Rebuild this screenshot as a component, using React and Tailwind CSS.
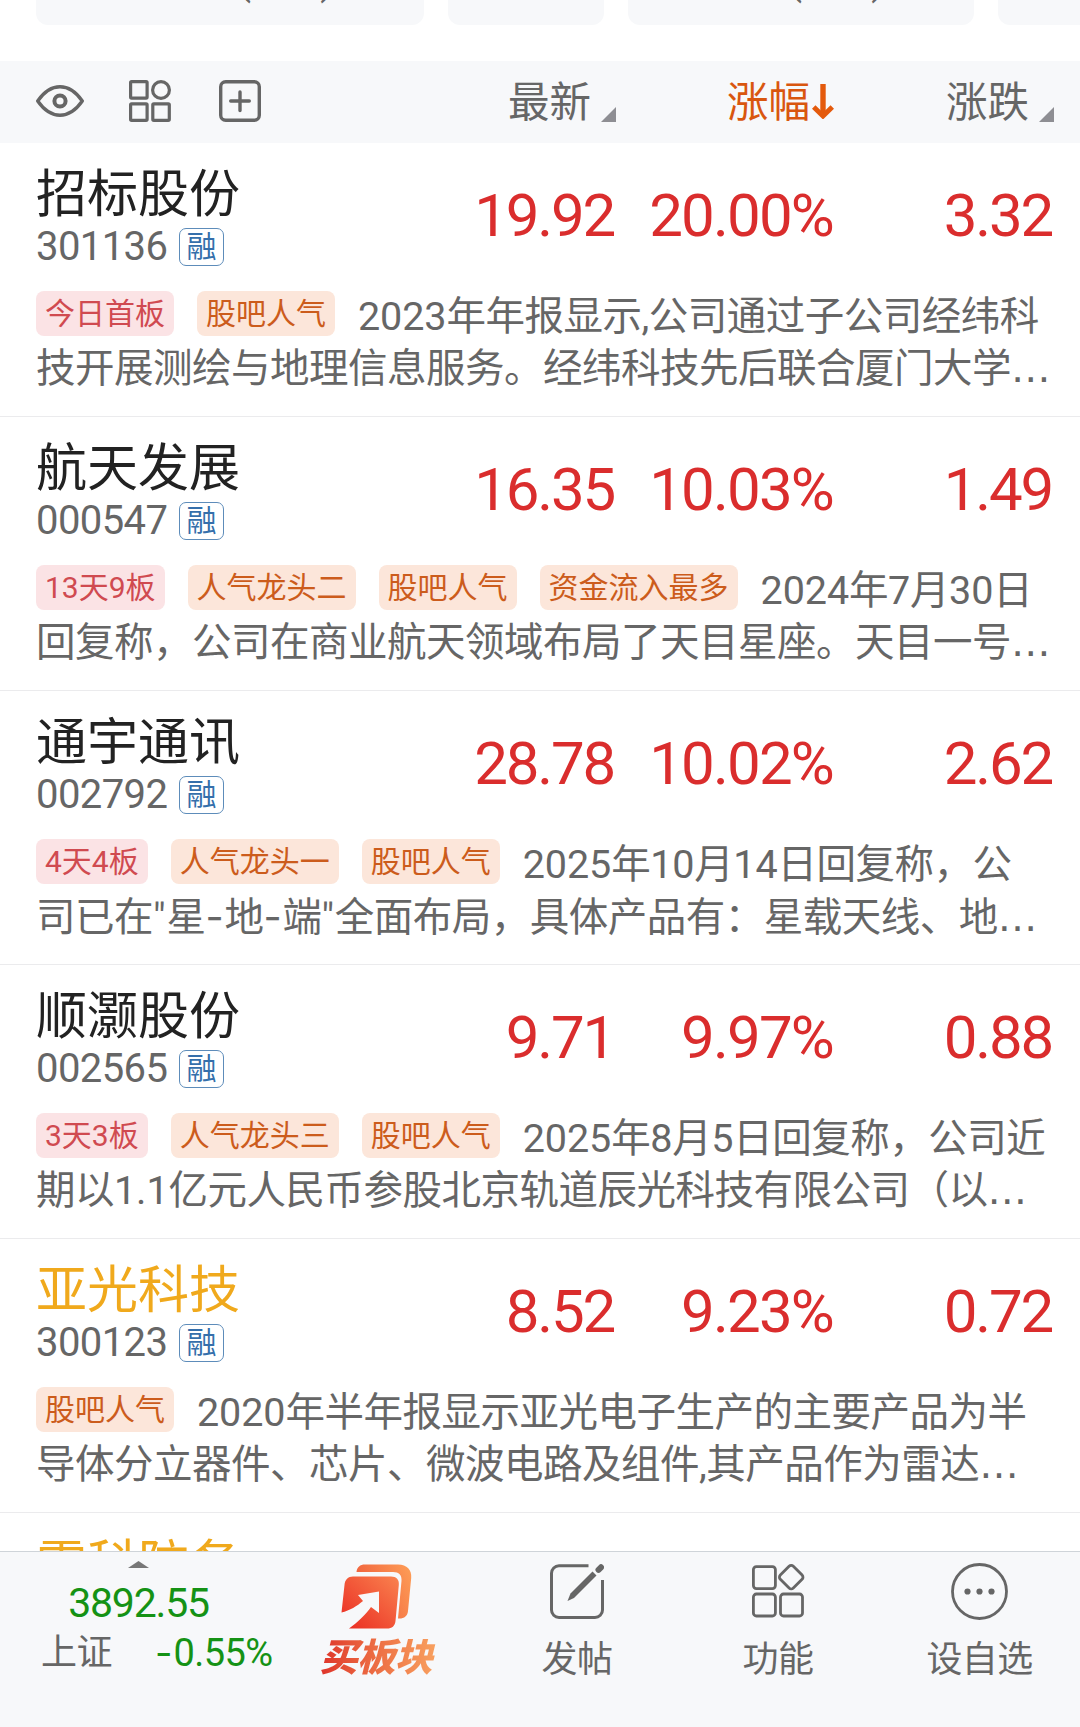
const stocks = [
  {
    name: '招标股份', code: '301136', price: '19.92', pct: '20.00%', change: '3.32',
    streak: '今日首板', tags: ['股吧人气'],
    lines: ['2023年年报显示,公司通过子公司经纬科', '技开展测绘与地理信息服务。经纬科技先后联合厦门大学…'],
  },
  {
    name: '航天发展', code: '000547', price: '16.35', pct: '10.03%', change: '1.49',
    streak: '13天9板', tags: ['人气龙头二', '股吧人气', '资金流入最多'],
    lines: ['2024年7月30日', '回复称，公司在商业航天领域布局了天目星座。天目一号…'],
  },
  {
    name: '通宇通讯', code: '002792', price: '28.78', pct: '10.02%', change: '2.62',
    streak: '4天4板', tags: ['人气龙头一', '股吧人气'],
    lines: ['2025年10月14日回复称，公', '司已在"星-地-端"全面布局，具体产品有：星载天线、地…'],
  },
  {
    name: '顺灏股份', code: '002565', price: '9.71', pct: '9.97%', change: '0.88',
    streak: '3天3板', tags: ['人气龙头三', '股吧人气'],
    lines: ['2025年8月5日回复称，公司近', '期以1.1亿元人民币参股北京轨道辰光科技有限公司（以…'],
  },
  {
    name: '亚光科技', code: '300123', price: '8.52', pct: '9.23%', change: '0.72', held: true,
    tags: ['股吧人气'],
    lines: ['2020年半年报显示亚光电子生产的主要产品为半', '导体分立器件、芯片、微波电路及组件,其产品作为雷达…'],
  },
];

// latin runs are tracked looser than the CJK text around them,
// hyphen and ellipsis come from fonts with wider glyphs
function Mixed({ text }) {
  return text.split(/(-|…|"|[\d.]+)/).filter(Boolean).map((part, i) => {
    if (part === '-') return <span key={i} className="font-['Inter'] tracking-[0.8px]">-</span>;
    if (part === '…') return <span key={i} className="font-['DejaVu_Sans'] leading-none tracking-normal">…</span>;
    if (part === '"') return <span key={i} className="tracking-[0.8px]">"</span>;
    if (/^\d/.test(part)) return <span key={i} className="tracking-[-0.1px]">{part}</span>;
    return part;
  });
}

function Chip({ className, children }) {
  return (
    <div className={`-mt-[35px] h-[60px] shrink-0 rounded-[12px] bg-[#f7f8fa] pl-[37px] text-[41px] leading-[30px] text-[#666] ${className}`}>
      {children}
    </div>
  );
}

function Corner() {
  return (
    <svg className="ml-[9px] mt-[25px] h-[15px] w-[15px]" viewBox="0 0 15 15">
      <path d="M15 0V15H0Z" fill="#8e8e93" />
    </svg>
  );
}

function ListHeader() {
  return (
    <div className="flex h-[82px] shrink-0 items-center bg-[#f7f8fa] pl-9 text-[41.5px] leading-[60px] text-[#666]">
      <div className="mb-[2px] flex items-center">
        <svg className="h-8 w-12" viewBox="0 0 48 32" fill="none" stroke="#666" strokeWidth="3.4">
          <path d="M1.7 16C8 7 16 1.8 24 1.8S40 7 46.3 16C40 25 32 30.2 24 30.2S8 25 1.7 16Z" strokeLinejoin="round" />
          <circle cx="24" cy="16" r="5.6" strokeWidth="4" />
        </svg>
        <svg className="ml-[45px] h-[42px] w-[42px]" viewBox="0 0 42 42" fill="none" stroke="#666" strokeWidth="3.2">
          <rect x="1.6" y="1.6" width="16.5" height="16.5" rx="1" />
          <circle cx="32" cy="10" r="8.4" />
          <rect x="1.6" y="23.8" width="16.5" height="16.5" rx="1" />
          <rect x="23.8" y="23.8" width="16.5" height="16.5" rx="1" />
        </svg>
        <svg className="ml-12 h-[42px] w-[42px]" viewBox="0 0 42 42" fill="none" stroke="#666" strokeWidth="3.4">
          <rect x="1.7" y="1.7" width="38.6" height="38.6" rx="5" />
          <path d="M21 12V30.5M11.7 21H30.3" strokeLinecap="round" />
        </svg>
      </div>
      <div className="ml-auto flex w-[220px] items-center justify-end">
        <span className="mr-[1px] pt-[2px]">最新</span>
        <Corner />
      </div>
      <div className="flex w-[219px] items-center justify-end pr-[1px] text-[#d9560f]">
        <span className="pt-[2px]">涨幅</span>
        <svg className="ml-[2px] mb-[2px] h-[35px] w-[22px]" viewBox="0 0 22 35" fill="none" stroke="#e45a0c" strokeWidth="5">
          <path d="M11 0V31" strokeWidth="5.4" />
          <path d="M1.7 23L11 32L20.3 23" />
        </svg>
      </div>
      <div className="mr-[26px] flex w-[219px] items-center justify-end">
        <span className="mr-[1px] pt-[2px]">涨跌</span>
        <Corner />
      </div>
    </div>
  );
}

function Tag({ tone, children }) {
  return (
    <span className={`mr-[23px] h-[45px] rounded-[8px] px-[9px] text-[30px] leading-[45px] tracking-normal ${tone}`}>
      {children}
    </span>
  );
}

function StockName({ held, children }) {
  return (
    <div className={`h-[60px] text-[51px] leading-[59px] ${held ? 'text-[#f0a91c]' : 'text-[#222]'}`}>
      {children}
    </div>
  );
}

function StockRow({ stock }) {
  return (
    <div className="h-[274px] shrink-0 border-b border-[#ebebed] pl-9 pt-[22px] whitespace-nowrap">
      <div className="flex h-[106px]">
        <div className="flex-1">
          <StockName held={stock.held}>{stock.name}</StockName>
          <div className="flex h-[44px] items-center text-[40px] tracking-[-0.6px] text-[#666]">
            <span className="w-[143px]">{stock.code}</span>
            <span className="h-[38px] w-[45px] rounded-[7px] border border-[#5d8cba] text-center text-[30px] leading-[35px] tracking-normal text-[#356fab]">
              融
            </span>
          </div>
        </div>
        <div className="mr-[28px] flex pt-[16px] text-[60px] leading-[70px] text-[#da2d2d]">
          <span className="w-[220px] text-right tracking-[-2.2px]">{stock.price}</span>
          <span className="w-[219px] text-right tracking-[-1.8px]">{stock.pct}</span>
          <span className="w-[219px] text-right tracking-[-2.2px]">{stock.change}</span>
        </div>
      </div>
      <div className="text-[39.5px] tracking-[-0.5px] text-[#666]">
        <div className="mt-[20px] flex h-[49px] leading-[52px]">
          {stock.streak && <Tag tone="bg-[#fbe3e5] text-[#d04a50]">{stock.streak}</Tag>}
          {stock.tags.map(tag => <Tag key={tag} tone="bg-[#fce6da] text-[#cc5c1c]">{tag}</Tag>)}
          <span><Mixed text={stock.lines[0]} /></span>
        </div>
        <div className="leading-[58px]"><Mixed text={stock.lines[1]} /></div>
      </div>
    </div>
  );
}

function BuyLogo() {
  return (
    <svg className="h-[65px] w-[71px]" viewBox="0 0 71 65">
      <defs>
        <linearGradient id="front" x1="0" y1="1" x2="1" y2="0">
          <stop offset="0" stopColor="#ea2a22" />
          <stop offset="1" stopColor="#f9824e" />
        </linearGradient>
        <linearGradient id="back" x1="0" y1="0.6" x2="1" y2="0.2">
          <stop offset="0" stopColor="#ef5b3a" />
          <stop offset="1" stopColor="#fd9a55" />
        </linearGradient>
      </defs>
      <path d="M15.5 8C16 3 19 .5 24 .5H57C66 .5 71 6 70.2 14L67 47C66.5 52 63 55 57 54.5L60.5 17C61 11 58 8 52 8Z" fill="url(#back)" />
      <path d="M3.5 21C4 15.5 7 12.5 12 12.5H50C55.5 12.5 58.3 15.5 57.8 21L54.5 57C54 62 51 64.5 46 64.5H8C17 58 25 50 30 43L38 49V27.5L17 31L22 37C16 42 9 46.5 0.5 48.5Z" fill="url(#front)" />
    </svg>
  );
}

function BarItem({ label, className, children }) {
  return (
    <div className={`flex flex-col items-center text-[36px] leading-[50px] tracking-[-0.6px] text-[#666] ${className}`}>
      <div className="flex h-[60px] items-center">{children}</div>
      <span className="mt-[14px]">{label}</span>
    </div>
  );
}

function BottomBar() {
  return (
    <div className="flex h-[176px] shrink-0 border-t border-[#cfd4d9] bg-[#f7f8fa] pt-[9px] whitespace-nowrap">
      <div className="flex w-[277px] flex-col items-center text-[#159215]">
        <svg className="h-[7px] w-[21px]" viewBox="0 0 21 7">
          <path d="M10.5 0L21 7H0Z" fill="#777" />
        </svg>
        <div className="mt-[10px] text-[41px] leading-[50px] tracking-[-1.2px]">3892.55</div>
        <div className="flex w-full pl-[41px] text-[38px] leading-[48px] tracking-[-0.6px]">
          <span className="w-[114px] pt-[1px] text-[36px] tracking-[-0.6px] text-[#666]">上证</span>
          <span><span className="font-['Inter'] tracking-[1px]">-</span>0.55%</span>
        </div>
      </div>
      <div className="mr-[2px] flex w-[198px] flex-col items-center pt-[3px]">
        <BuyLogo />
        <span className="mt-[6px] bg-linear-to-r from-[#dd2c28] to-[#f8a05f] bg-clip-text px-1 text-[38px] leading-[46px] font-black tracking-[-0.5px] text-transparent italic">
          买板块
        </span>
      </div>
      <BarItem label="发帖" className="w-[200px]">
        <svg className="h-[55px] w-[54px]" viewBox="0 0 54 55" fill="none" stroke="#666" strokeWidth="3">
          <path d="M38.5 1.8H9A7.5 7.5 0 0 0 1.5 9.3V46A7.5 7.5 0 0 0 9 53.5H45A7.5 7.5 0 0 0 52.5 46V16" />
          <path d="M17.5 37L20.5 29.5L42.5 7.5L46.5 11.5L24 34Z" fill="#666" stroke="none" />
          <path d="M48.5 5.8L51 3.3" strokeWidth="6" strokeLinecap="round" />
        </svg>
      </BarItem>
      <BarItem label="功能" className="w-[202px]">
        <svg className="h-[54px] w-[53px]" viewBox="0 0 53 54" fill="none" stroke="#666" strokeWidth="2.8">
          <rect x="1.4" y="2.6" width="22" height="22" rx="3" />
          <rect x="30" y="4" width="18.4" height="18.4" rx="3" transform="rotate(45 39.2 13.2)" />
          <rect x="1.4" y="30" width="22" height="22" rx="3" />
          <rect x="28.5" y="30" width="22" height="22" rx="3" />
        </svg>
      </BarItem>
      <BarItem label="设自选" className="w-[201px]">
        <svg className="h-[57px] w-[57px]" viewBox="0 0 57 57" fill="#666">
          <circle cx="28.5" cy="28.5" r="27" fill="none" stroke="#666" strokeWidth="2.8" />
          <circle cx="16.5" cy="28.5" r="3.1" />
          <circle cx="28.5" cy="28.5" r="3.1" />
          <circle cx="40.5" cy="28.5" r="3.1" />
        </svg>
      </BarItem>
    </div>
  );
}

export default function App() {
  return (
    <div className="flex h-[1727px] w-[1080px] flex-col overflow-hidden bg-white font-['Roboto','Noto_Sans_CJK_SC',sans-serif]">
      <div className="flex h-[61px] shrink-0 items-start gap-6 overflow-hidden pl-9 whitespace-nowrap">
        <Chip className="w-[388px]">商业航天(151)</Chip>
        <Chip className="w-[156px]">军工</Chip>
        <Chip className="w-[346px]">大飞机(182)</Chip>
        <Chip className="w-[156px]">卫星</Chip>
      </div>
      <ListHeader />
      <div className="flex min-h-0 flex-1 flex-col overflow-hidden">
        {stocks.map(stock => <StockRow key={stock.code} stock={stock} />)}
        <div className="shrink-0 pl-9 pt-[22px]">
          <StockName held>雷科防务</StockName>
        </div>
      </div>
      <BottomBar />
    </div>
  );
}
